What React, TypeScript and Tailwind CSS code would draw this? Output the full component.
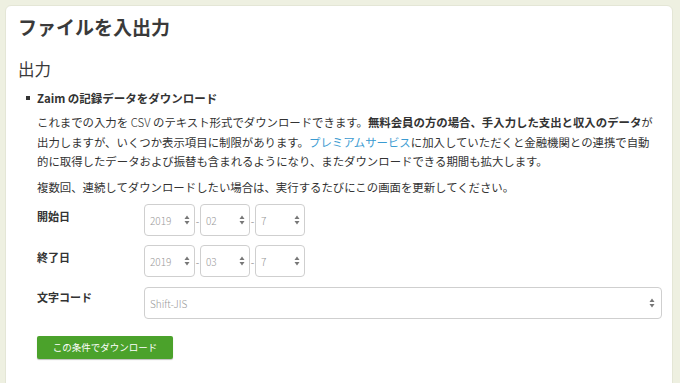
import React from "react";

const font = { fontFamily: '"Noto Sans CJK JP", "Noto Sans", sans-serif' };

function Arrows() {
  return (
    <svg width="6" height="10" viewBox="0 0 6 10" className="shrink-0">
      <path d="M3 0.5 L5.5 4 H0.5 Z" fill="#777" />
      <path d="M3 9.5 L5.5 6 H0.5 Z" fill="#777" />
    </svg>
  );
}

function FakeSelect({ value, className }: { value: string; className: string }) {
  return (
    <div
      className={`flex h-[32px] items-center justify-between rounded-[4px] border border-[#cfcfcf] bg-white pl-[5px] pr-[4px] text-[10px] font-light text-[#999] ${className}`}
    >
      <span>{value}</span>
      <Arrows />
    </div>
  );
}

function DateRow({ label, y, m, d }: { label: string; y: string; m: string; d: string }) {
  return (
    <div className="flex">
      <div className="w-[107px] pt-[4px] text-[11px] font-bold text-[#333]">{label}</div>
      <div className="flex items-center">
        <FakeSelect value={y} className="w-[51px]" />
        <span className="w-[5px] text-center text-[10px] text-[#999]">-</span>
        <FakeSelect value={m} className="w-[50px]" />
        <span className="w-[5px] text-center text-[10px] text-[#999]">-</span>
        <FakeSelect value={d} className="w-[50px]" />
      </div>
    </div>
  );
}

export default function App() {
  return (
    <div className="h-[383px] overflow-hidden bg-[#eef0e1] pl-[5px] pr-[7px] pt-[5px]" style={font}>
      <div className="h-[400px] rounded-[6px] border border-[#e4e6d6] bg-white pl-[12px] pr-[10px] pt-[8px] text-[#333]">
        <h1 className="text-[19px] font-bold leading-[26px] text-[#3a3a3a]">ファイルを入出力</h1>
        <h2 className="mt-[17px] text-[16.5px] leading-[24px] text-[#3a3a3a]">出力</h2>

        <div className="mt-[8px] flex items-center pl-[8px]">
          <span className="mr-[7px] h-[4px] w-[4px] bg-[#333]" />
          <span className="text-[11.5px] font-bold leading-[18px]">Zaim の記録データをダウンロード</span>
        </div>

        <div className="pl-[19px]">
          <p className="mt-[6px] whitespace-nowrap text-[11.4px] leading-[19.5px]">
            これまでの入力を <span className="font-light">CSV</span> のテキスト形式でダウンロードできます。
            <b>無料会員の方の場合、手入力した支出と収入のデータ</b>が
            <br />
            出力しますが、いくつか表示項目に制限があります。
            <span className="text-[#3b9bd1]">プレミアムサービス</span>に加入していただくと金融機関との連携で自動
            <br />
            的に取得したデータおよび振替も含まれるようになり、またダウンロードできる期間も拡大します。
          </p>
          <p className="mt-[6px] text-[11.4px] leading-[19.5px]">
            複数回、連続してダウンロードしたい場合は、実行するたびにこの画面を更新してください。
          </p>

          <div className="mt-[7px] flex flex-col gap-[9px]">
            <DateRow label="開始日" y="2019" m="02" d="7" />
            <DateRow label="終了日" y="2019" m="03" d="7" />
            <div className="mt-[1px] flex">
              <div className="w-[107px] pt-[2px] text-[11px] font-bold">文字コード</div>
              <FakeSelect value="Shift-JIS" className="h-[31px] flex-1 pr-[6px]" />
            </div>
          </div>

          <button className="mt-[17px] flex h-[23px] w-[136px] items-center justify-center rounded-[2px] bg-[#4ba22b] text-[9.5px] text-white shadow-[0_1px_1px_rgba(0,0,0,0.25)]">
            この条件でダウンロード
          </button>
        </div>
      </div>
    </div>
  );
}
